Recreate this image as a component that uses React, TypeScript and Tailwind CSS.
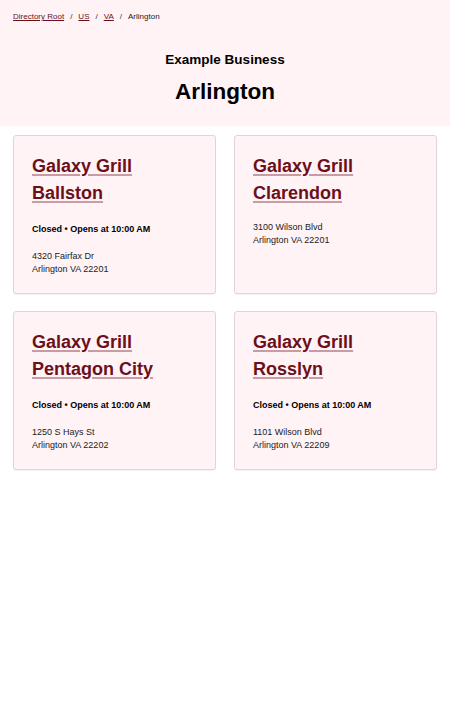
import React from 'react';

type Location = {
    name: string;
    closed: boolean;
    street: string;
    city: string;
};

const locations: Location[] = [
    { name: 'Galaxy Grill Ballston', closed: true, street: '4320 Fairfax Dr', city: 'Arlington VA 22201' },
    { name: 'Galaxy Grill Clarendon', closed: false, street: '3100 Wilson Blvd', city: 'Arlington VA 22201' },
    { name: 'Galaxy Grill Pentagon City', closed: true, street: '1250 S Hays St', city: 'Arlington VA 22202' },
    { name: 'Galaxy Grill Rosslyn', closed: true, street: '1101 Wilson Blvd', city: 'Arlington VA 22209' },
];

const LocationCard: React.FC<{ loc: Location }> = ({ loc }) => (
    <div className="bg-[#fff3f5] border border-[#dcd6d8] rounded-[3px] shadow-[0_1px_1px_rgba(0,0,0,0.05)] px-[18px] pt-[17px] pb-[17px]">
        <a href="#" className="block text-[18px] leading-[27px] font-bold text-[#6b0f1a] underline decoration-[#c79ca5] decoration-2 underline-offset-2 pr-6">
            {loc.name}
        </a>
        {loc.closed && (
            <div className="mt-[16px] text-[9px] leading-[13px] font-bold text-black">Closed • Opens at 10:00 AM</div>
        )}
        <div className="mt-[14px] text-[9px] leading-[13px] text-[#222]">
            <div>{loc.street}</div>
            <div>{loc.city}</div>
        </div>
    </div>
);

const App: React.FC = () => {
    return (
        <div className="min-h-screen bg-white font-['Liberation_Sans',Arial,sans-serif]">
            <div className="bg-[#fff3f5] px-[13px] pt-[12px] pb-[20px]">
                <nav className="flex items-center gap-[6px] text-[8px] leading-[10px]">
                    <a href="#" className="text-[#6b0f1a] underline">Directory Root</a>
                    <span className="text-[#333]">/</span>
                    <a href="#" className="text-[#6b0f1a] underline">US</a>
                    <span className="text-[#333]">/</span>
                    <a href="#" className="text-[#6b0f1a] underline">VA</a>
                    <span className="text-[#333]">/</span>
                    <span className="text-[#222]">Arlington</span>
                </nav>
                <div className="mt-[29px] text-center text-[13.5px] leading-[18px] font-bold text-black">Example Business</div>
                <h1 className="mt-[9px] text-center text-[22.5px] leading-[28px] font-bold text-black">Arlington</h1>
            </div>
            <div className="grid grid-cols-2 gap-x-[18px] gap-y-[17px] px-[13px] pt-[9px]">
                {locations.map((loc) => (
                    <LocationCard key={loc.name} loc={loc} />
                ))}
            </div>
        </div>
    );
};

export default App;
